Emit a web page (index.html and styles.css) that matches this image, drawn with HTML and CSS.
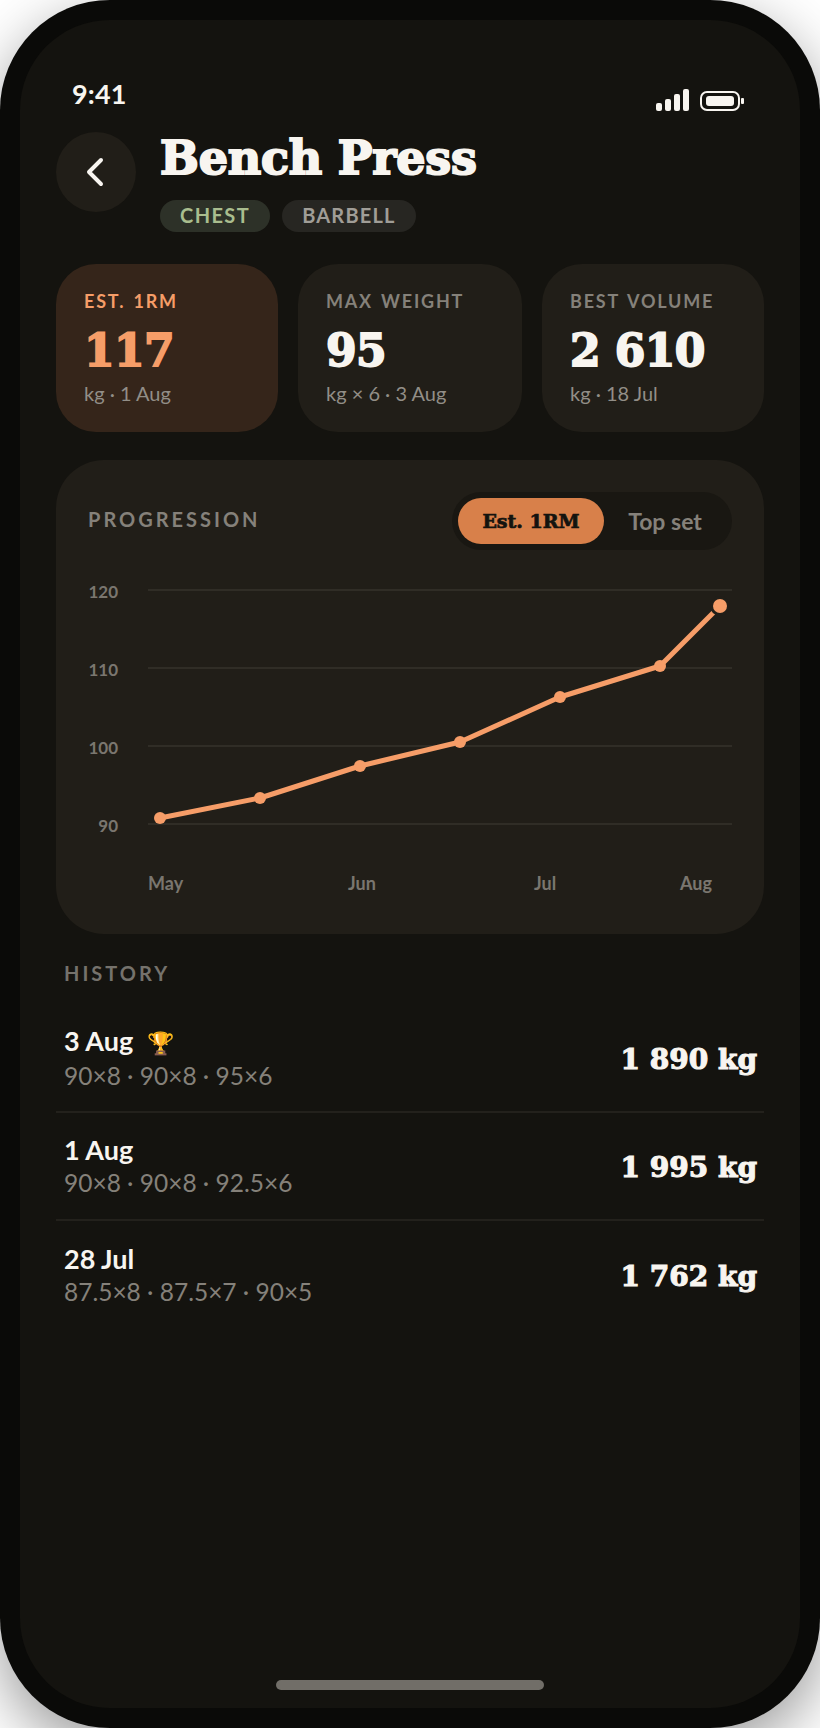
FILE: index.html
```html
<!DOCTYPE html>
<html lang="en">
<head>
<meta charset="utf-8">
<title>Bench Press</title>
<link rel="stylesheet" href="styles.css">
</head>
<body>
<div class="phone">
  <div class="screen">
    <div class="status">
      <span class="time">9:41</span>
      <span class="status-icons">
        <svg class="signal" width="34" height="22" viewBox="0 0 34 22"><rect x="0" y="14" width="6" height="8" rx="2"/><rect x="9" y="10" width="6" height="12" rx="2"/><rect x="18" y="5" width="6" height="17" rx="2"/><rect x="27" y="0" width="6" height="22" rx="2"/></svg>
        <svg class="battery" width="44" height="20" viewBox="0 0 44 20"><rect class="batt-case" x="1" y="1" width="38" height="18" rx="6"/><rect class="batt-fill" x="6" y="5" width="28" height="10" rx="3"/><rect class="batt-fill" x="41" y="7" width="3" height="6" rx="1"/></svg>
      </span>
    </div>
    <header class="head">
      <button class="back" aria-label="Back">
        <svg width="20" height="30" viewBox="0 0 20 30"><path d="M15 3 L3 15 L15 27"/></svg>
      </button>
      <div class="head-text">
        <h1 class="title">Bench Press</h1>
        <div class="chips"><span class="chip chip-green">CHEST</span><span class="chip">BARBELL</span></div>
      </div>
    </header>
    <section class="stats">
      <div class="stat stat-hot"><div class="stat-label">EST. 1RM</div><div class="stat-value">117</div><div class="stat-sub">kg · 1 Aug</div></div>
      <div class="stat"><div class="stat-label">MAX WEIGHT</div><div class="stat-value">95</div><div class="stat-sub">kg × 6 · 3 Aug</div></div>
      <div class="stat"><div class="stat-label">BEST VOLUME</div><div class="stat-value">2 610</div><div class="stat-sub">kg · 18 Jul</div></div>
    </section>
    <section class="chart-card">
      <div class="chart-head">
        <span class="section-label chart-label">PROGRESSION</span>
        <div class="toggle"><span class="toggle-on">Est. 1RM</span><span class="toggle-off">Top set</span></div>
      </div>
      <svg class="chart" width="644" height="350" viewBox="0 0 644 350">
        <g class="grid"><line x1="60" x2="644" y1="38" y2="38"/><line x1="60" x2="644" y1="116" y2="116"/><line x1="60" x2="644" y1="194" y2="194"/><line x1="60" x2="644" y1="272" y2="272"/></g>
        <g class="ylab"><text x="30" y="46" text-anchor="end">120</text><text x="30" y="124" text-anchor="end">110</text><text x="30" y="202" text-anchor="end">100</text><text x="30" y="280" text-anchor="end">90</text></g>
        <g class="xlab"><text x="60" y="338">May</text><text x="260" y="338">Jun</text><text x="446" y="338">Jul</text><text x="592" y="338">Aug</text></g>
        <polyline class="line" points="72,266 172,246 272,214 372,190 472,145 572,114 632,54"/>
        <g class="dots"><circle cx="72" cy="266" r="6"/><circle cx="172" cy="246" r="6"/><circle cx="272" cy="214" r="6"/><circle cx="372" cy="190" r="6"/><circle cx="472" cy="145" r="6"/><circle cx="572" cy="114" r="6"/><circle class="dot-last" cx="632" cy="54" r="7"/></g>
      </svg>
    </section>
    <section class="history">
      <div class="section-label history-label">HISTORY</div>
      <div class="row">
        <div><div class="row-date">3 Aug <span class="trophy">🏆</span></div><div class="row-sets">90×8 · 90×8 · 95×6</div></div>
        <div class="row-total">1 890 kg</div>
      </div>
      <div class="row">
        <div><div class="row-date">1 Aug</div><div class="row-sets">90×8 · 90×8 · 92.5×6</div></div>
        <div class="row-total">1 995 kg</div>
      </div>
      <div class="row row-last">
        <div><div class="row-date">28 Jul</div><div class="row-sets">87.5×8 · 87.5×7 · 90×5</div></div>
        <div class="row-total">1 762 kg</div>
      </div>
    </section>
    <div class="home"></div>
  </div>
</div>
</body>
</html>
```
FILE: styles.css
```css
* { box-sizing: border-box; }
html, body { margin: 0; padding: 0; background: #fff; }
body { width: 820px; height: 1728px; overflow: hidden; font-family: Lato, "Open Sans", sans-serif; }
.phone { width: 820px; height: 1728px; padding: 20px; background: #0a0a08; border-radius: 110px; box-shadow: 0 20px 60px rgba(0,0,0,.4); }
.screen { position: relative; width: 780px; height: 1688px; background: #14130f; border-radius: 90px; padding: 60px 36px 0; color: #f8f5f0; overflow: hidden; }
.status { display: flex; justify-content: space-between; align-items: center; height: 26px; margin-bottom: 2px; padding: 0 20px 0 16px; }
.time { font-weight: 700; font-size: 27px; letter-spacing: .2px; }
.status-icons { display: flex; align-items: flex-end; gap: 10px; margin-top: 14px; }
.signal rect, .batt-fill { fill: #f8f5f0; }
.batt-case { fill: none; stroke: #f8f5f0; stroke-width: 2; }
.head { display: flex; gap: 24px; margin-top: 26px; }
.back { width: 80px; height: 80px; border: 0; padding: 0; border-radius: 50%; background: #211e18; display: flex; align-items: center; justify-content: center; }
.back path { fill: none; stroke: #f8f5f0; stroke-width: 4; stroke-linecap: round; stroke-linejoin: round; }
.title { margin: -2px 0 0; font: 700 46px/56px "DejaVu Serif", serif; letter-spacing: -.2px; -webkit-text-stroke: 2px #f8f5f0; }
.chips { display: flex; gap: 12px; margin-top: 14px; }
.chip { height: 32px; padding: 0 20px; border-radius: 16px; background: #272622; color: #a09d97; font-size: 20px; font-weight: 700; letter-spacing: 1.2px; line-height: 30px; }
.chip-green { background: #2d3128; color: #a9bd8e; letter-spacing: 1.4px; }
.stats { display: grid; grid-template-columns: 222px 224px 222px; gap: 20px; margin-top: 32px; }
.stat { height: 168px; border-radius: 40px; background: #211e18; padding: 26px 28px 0; }
.stat-hot { background: #35251a; }
.stat-label { font-size: 18px; line-height: 22px; font-weight: 700; letter-spacing: 1.8px; word-spacing: 2px; color: #85817a; }
.stat-hot .stat-label, .stat-hot .stat-value { color: #f69d68; }
.stat-hot .stat-value { -webkit-text-stroke-color: #f69d68; }
.stat-value { font: 700 44px/56px "DejaVu Serif", serif; margin-top: 11px; letter-spacing: -.6px; -webkit-text-stroke: 1.8px #f8f5f0; }
.stat-sub { font-size: 20px; line-height: 26px; color: #928e87; margin-top: 1px; }
.chart-card { height: 474px; margin-top: 28px; border-radius: 48px; background: #211e18; padding: 32px; }
.chart-head { display: flex; justify-content: space-between; align-items: center; height: 58px; }
.section-label { font-size: 20px; font-weight: 700; letter-spacing: 3px; color: #85817a; }
.chart-label { margin-top: -5px; }
.toggle { width: 280px; height: 58px; padding: 6px; border-radius: 29px; background: #191712; display: flex; align-items: center; }
.toggle-on { width: 146px; height: 46px; border-radius: 23px; background: #d8804a; color: #14130f; text-align: center; font: 700 19px/46px "DejaVu Serif", serif; -webkit-text-stroke: .7px #14130f; }
.toggle-off { flex: 1; text-align: center; color: #85817a; font-size: 23px; font-weight: 700; }
.chart { display: block; margin-top: 2px; }
.grid line { stroke: #302d26; stroke-width: 2; }
.ylab text, .xlab text { font-family: Lato, sans-serif; font-weight: 700; font-size: 17px; fill: #7a766f; }
.xlab text { font-size: 18px; }
.line { fill: none; stroke: #f69d68; stroke-width: 5; stroke-linejoin: round; }
.dots circle { fill: #f69d68; }
.dots .dot-last { stroke: #211e18; stroke-width: 6; paint-order: stroke; }
.history { margin-top: 26px; }
.history-label { padding-left: 8px; margin-bottom: 19px; letter-spacing: 3px; color: #75726c; font-size: 20px; line-height: 26px; }
.row { display: flex; justify-content: space-between; align-items: center; height: 108px; padding: 0 7px 0 8px; border-bottom: 2px solid #23211c; }
.row-last { border-bottom: 0; }
.row-date { font-size: 27px; font-weight: 700; line-height: 34px; }
.trophy { font-size: 22px; margin-left: 7px; }
.row-sets { font-size: 24.5px; line-height: 32px; color: #85817a; }
.row-total { margin-top: 4px; font: 700 28px/40px "DejaVu Serif", serif; -webkit-text-stroke: 1.1px #f8f5f0; }
.home { position: absolute; left: 256px; bottom: 18px; width: 268px; height: 10px; border-radius: 5px; background: #716e68; }
```
